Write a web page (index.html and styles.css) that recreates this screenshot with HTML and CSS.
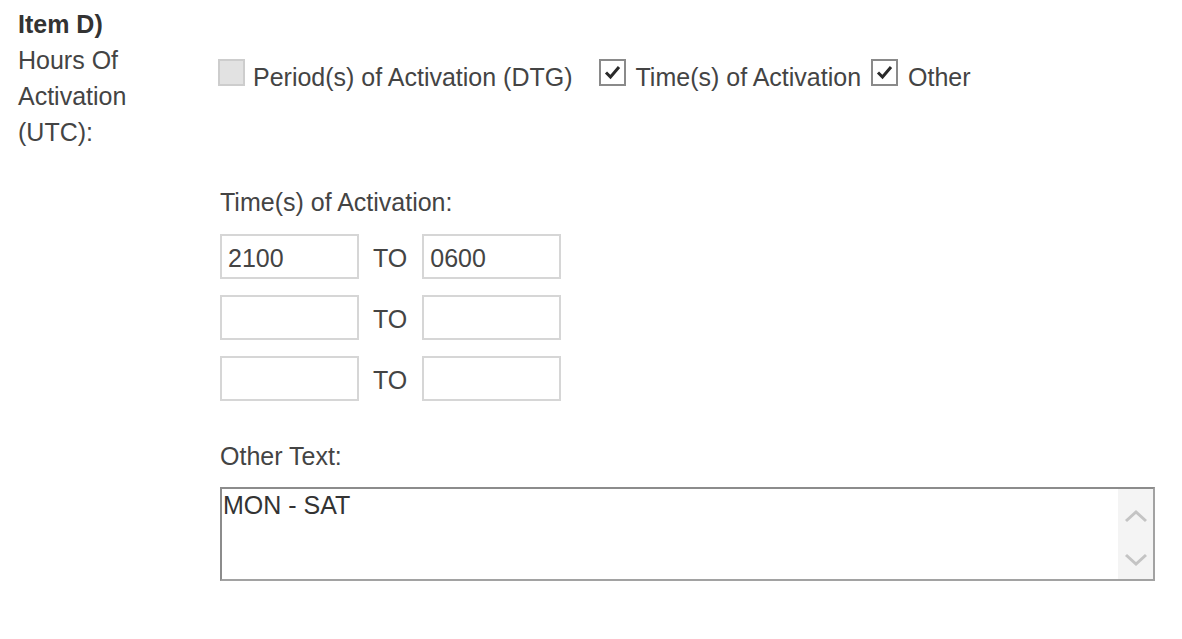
FILE: index.html
```html
<!DOCTYPE html>
<html lang="en">
<head>
    <meta charset="UTF-8">
    <meta name="viewport" content="width=device-width, initial-scale=1.0">
    <title>Hours Of Activation</title>
    <link rel="stylesheet" href="styles.css">
</head>
<body>
    <div class="item">
        <div class="item-head">
            <div class="item-label">
                <b>Item D)</b><br>
                Hours Of<br>
                Activation<br>
                (UTC):
            </div>
            <div class="choices">
                <span class="box box-off"></span>
                <span class="choice-text first">Period(s) of Activation (DTG)</span>
                <span class="box">
                    <svg width="23" height="23" viewBox="0 0 23 23"><path d="M5 11.5 L9.5 16 L18 6" fill="none" stroke="#2a2a2a" stroke-width="3"/></svg>
                </span>
                <span class="choice-text">Time(s) of Activation</span>
                <span class="box">
                    <svg width="23" height="23" viewBox="0 0 23 23"><path d="M5 11.5 L9.5 16 L18 6" fill="none" stroke="#2a2a2a" stroke-width="3"/></svg>
                </span>
                <span class="choice-text">Other</span>
            </div>
        </div>

        <div class="item-body">
            <div class="field-label">Time(s) of Activation:</div>
            <div class="time-rows">
                <div class="time-row">
                    <input type="text" class="time" value="2100">
                    <span class="to">TO</span>
                    <input type="text" class="time" value="0600">
                </div>
                <div class="time-row">
                    <input type="text" class="time">
                    <span class="to">TO</span>
                    <input type="text" class="time">
                </div>
                <div class="time-row">
                    <input type="text" class="time">
                    <span class="to">TO</span>
                    <input type="text" class="time">
                </div>
            </div>

            <div class="field-label other-label">Other Text:</div>
            <div class="textbox">
                <textarea class="other-text">MON - SAT</textarea>
                <div class="scroll">
                    <svg width="24" height="14" viewBox="0 0 24 14"><path d="M2 12 L12 3 L22 12" fill="none" stroke="#c4c4c4" stroke-width="3"/></svg>
                    <svg width="24" height="14" viewBox="0 0 24 14"><path d="M2 2 L12 11 L22 2" fill="none" stroke="#c4c4c4" stroke-width="3"/></svg>
                </div>
            </div>
        </div>
    </div>
</body>
</html>
```

FILE: styles.css
```css
body {
    margin: 0;
    font-family: "Liberation Sans", Arial, sans-serif;
    font-size: 25px;
    line-height: 36px;
    color: #444;
    background: #fff;
}
.item-head {
    display: flex;
    align-items: center;
}
.item-label {
    width: 200px;
    padding: 6px 0 3px 18px;
}
.item-label b {
    color: #333;
}
.choices {
    display: flex;
    align-items: flex-start;
}
.box {
    width: 27px;
    height: 27px;
    box-sizing: border-box;
    border: 2px solid #8a8a8a;
    background: #fff;
    display: flex;
    align-items: center;
    justify-content: center;
}
.box-off {
    border-color: #cdcdcd;
    background: #e2e2e2;
}
.choice-text {
    margin: 0 10px;
}
.choice-text.first {
    margin: 0 26px 0 8px;
}
.item-body {
    padding-left: 220px;
    margin-top: 31px;
}
.time-rows {
    margin-top: 14px;
    display: flex;
    flex-direction: column;
    gap: 16px;
}
.time-row {
    display: flex;
    align-items: center;
}
.time {
    width: 139px;
    height: 45px;
    box-sizing: border-box;
    border: 2px solid #d6d6d6;
    padding: 4px 6px 0;
    font-family: inherit;
    font-size: 25px;
    color: #444;
    outline: none;
}
.to {
    margin: 2px 15px 0 14px;
}
.other-label {
    margin-top: 37px;
}
.textbox {
    margin-top: 13px;
    width: 935px;
    height: 94px;
    box-sizing: border-box;
    border: 2px solid #a2a2a2;
    border-top-color: #8c8c8c;
    border-left-color: #8c8c8c;
    display: flex;
}
.other-text {
    flex: 1;
    border: none;
    resize: none;
    outline: none;
    overflow: hidden;
    padding: 3px 0 0 1px;
    font-family: inherit;
    font-size: 25px;
    line-height: 26px;
    color: #333;
}
.scroll {
    width: 35px;
    background: #f4f4f4;
    display: flex;
    flex-direction: column;
    align-items: center;
    justify-content: space-between;
    padding: 20px 0 12px;
}
```
